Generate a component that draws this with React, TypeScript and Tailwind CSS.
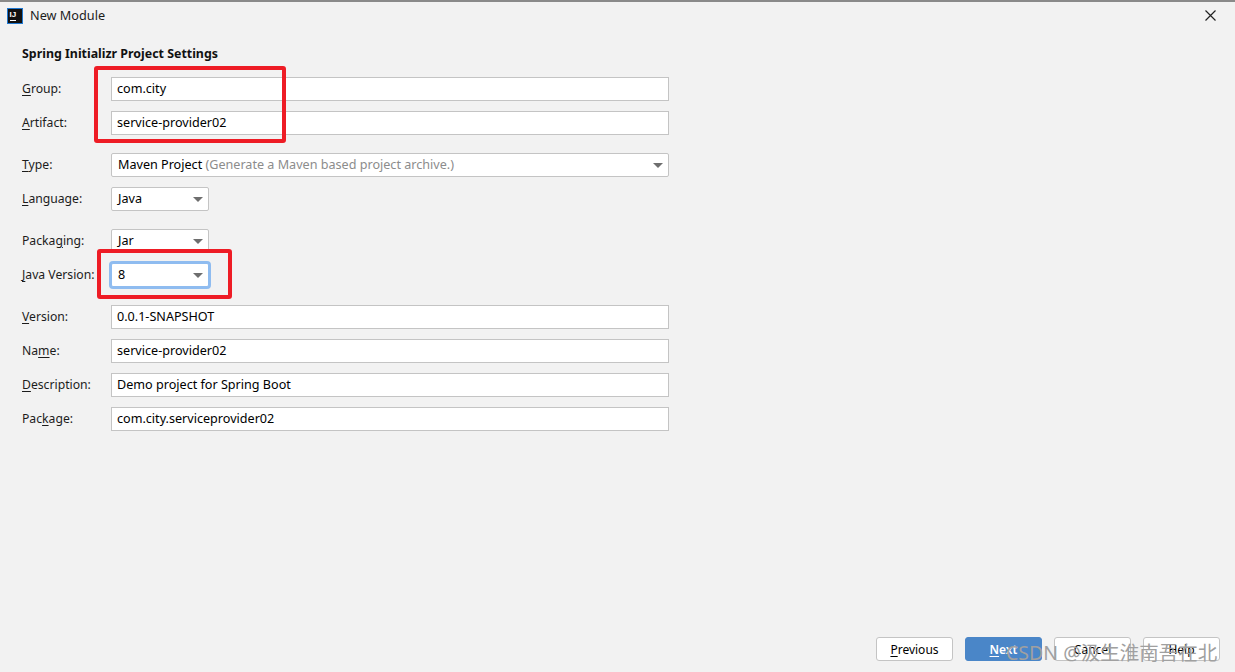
const font = "font-['Noto_Sans','Open_Sans',sans-serif]";

const Mnemonic = ({ before = "", letter, after = "" }: { before?: string; letter: string; after?: string }) => (
  <>
    {before}
    <span className="underline underline-offset-2">{letter}</span>
    {after}
  </>
);

const Row = ({ label, children, className = "" }: { label: React.ReactNode; children: React.ReactNode; className?: string }) => (
  <div className={`flex items-center h-6 ${className}`}>
    <label className="w-[89px] shrink-0 whitespace-nowrap text-[12.2px] text-[#1c1c1c]">{label}</label>
    {children}
  </div>
);

const Field = ({ value }: { value: string }) => (
  <div className="w-[558px] h-6 bg-white border border-[#c4c4c4] pl-[5px] leading-[22px] text-[12.6px] text-black">{value}</div>
);

const Arrow = () => (
  <svg width="10" height="5" viewBox="0 0 10 5" className="absolute right-[5px] top-[9px]">
    <path d="M0 0H10L5 5Z" fill="#6e6e6e" />
  </svg>
);

const Select = ({ value, hint, wide, focused }: { value: string; hint?: string; wide?: boolean; focused?: boolean }) => (
  <div
    className={`relative h-6 bg-white rounded-[2px] pl-[6px] leading-[22px] text-[12.6px] text-black border ${wide ? "w-[558px]" : "w-[98px]"} ${
      focused ? "border-[#8fbcf0] ring-2 ring-[#8fbcf0]" : "border-[#c4c4c4]"
    }`}
  >
    {value}
    {hint && <span className="text-[#8c8c8c]"> {hint}</span>}
    <Arrow />
  </div>
);

const Button = ({ children, primary }: { children: React.ReactNode; primary?: boolean }) => (
  <button
    className={`w-[77px] h-6 rounded-[3px] border text-center leading-[24px] ${
      primary ? "bg-[#4a86c8] border-[#4a86c8] text-white font-semibold" : "bg-white border-[#c4c4c4] text-black"
    }`}
  >
    {children}
  </button>
);

export default function App() {
  return (
    <div className={`relative flex flex-col h-[672px] w-[1235px] overflow-hidden bg-[#f2f2f2] text-[12px] ${font}`}>
      <header className="flex items-center h-[29px] border-t-2 border-[#8a8a8a] pl-[7px] pr-[19px]">
        <svg width="16" height="16" viewBox="0 0 16 16" className="shrink-0">
          <rect x="0.5" y="0.5" width="15" height="15" fill="#111" stroke="#1f78d1" />
          <text x="2.5" y="8.5" fill="#fff" fontSize="8" fontWeight="700" fontFamily="Liberation Sans">IJ</text>
          <rect x="3" y="12" width="6" height="1" fill="#fff" />
        </svg>
        <span className="ml-[7px] text-[12.7px] text-[#1c1c1c]">New Module</span>
        <svg width="11" height="11" viewBox="0 0 11 11" className="ml-auto">
          <path d="M0.5 0.5L10.5 10.5M10.5 0.5L0.5 10.5" stroke="#222" strokeWidth="1.2" />
        </svg>
      </header>

      <main className="pl-[22px] pt-[16px]">
        <h1 className="font-bold text-[12.4px] text-[#111] leading-[17px] mb-[15px]">Spring Initializr Project Settings</h1>
        <div className="flex flex-col gap-[10px]">
          <Row label={<Mnemonic letter="G" after="roup:" />}>
            <Field value="com.city" />
          </Row>
          <Row label={<Mnemonic letter="A" after="rtifact:" />}>
            <Field value="service-provider02" />
          </Row>
          <Row className="mt-2" label={<Mnemonic letter="T" after="ype:" />}>
            <Select wide value="Maven Project" hint="(Generate a Maven based project archive.)" />
          </Row>
          <Row label={<Mnemonic letter="L" after="anguage:" />}>
            <Select value="Java" />
          </Row>
          <Row className="mt-2" label={<Mnemonic before="Packa" letter="g" after="ing:" />}>
            <Select value="Jar" />
          </Row>
          <Row label={<Mnemonic letter="J" after="ava Version:" />}>
            <Select value="8" focused />
          </Row>
          <Row className="mt-2" label={<Mnemonic letter="V" after="ersion:" />}>
            <Field value="0.0.1-SNAPSHOT" />
          </Row>
          <Row label={<Mnemonic before="Na" letter="m" after="e:" />}>
            <Field value="service-provider02" />
          </Row>
          <Row label={<Mnemonic letter="D" after="escription:" />}>
            <Field value="Demo project for Spring Boot" />
          </Row>
          <Row label={<Mnemonic before="Pac" letter="k" after="age:" />}>
            <Field value="com.city.serviceprovider02" />
          </Row>
        </div>
      </main>

      <footer className="mt-auto flex justify-end gap-3 pr-[15px] pb-[11px]">
        <Button><Mnemonic letter="P" after="revious" /></Button>
        <Button primary><Mnemonic letter="N" after="ext" /></Button>
        <Button>Cancel</Button>
        <Button>Help</Button>
      </footer>

      {/* annotations drawn over the screenshot */}
      <div className="absolute left-[94px] top-[66px] w-[192px] h-[77px] border-4 border-[#ee1c25] rounded-[3px]" />
      <div className="absolute left-[97px] top-[249px] w-[135px] h-[50px] border-4 border-[#ee1c25] rounded-[3px]" />
      <div className="absolute left-[1006px] top-[639px] whitespace-nowrap text-[19.5px] leading-[28px] text-[#a0a0a0] font-['Noto_Sans','Noto_Sans_CJK_SC',sans-serif]">
        CSDN @汲生淮南吾在北
      </div>
    </div>
  );
}
